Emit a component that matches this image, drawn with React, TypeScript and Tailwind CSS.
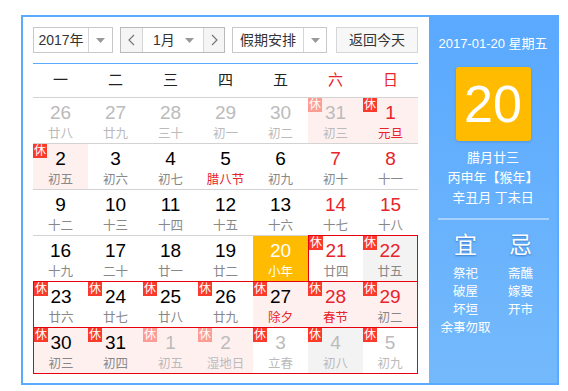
import React from 'react';

type Cell = {
  d: string;
  l: string;
  other?: boolean;
  red?: boolean;
  lred?: boolean;
  bg?: 'pink' | 'gray' | 'today';
  badge?: 'solid' | 'faded';
  box?: boolean;
};

const rows: Cell[][] = [
  [
    { d: '26', l: '廿八', other: true },
    { d: '27', l: '廿九', other: true },
    { d: '28', l: '三十', other: true },
    { d: '29', l: '初一', other: true },
    { d: '30', l: '初二', other: true },
    { d: '31', l: '初三', other: true, bg: 'pink', badge: 'faded' },
    { d: '1', l: '元旦', red: true, lred: true, bg: 'pink', badge: 'solid' },
  ],
  [
    { d: '2', l: '初五', bg: 'pink', badge: 'solid' },
    { d: '3', l: '初六' },
    { d: '4', l: '初七' },
    { d: '5', l: '腊八节', lred: true },
    { d: '6', l: '初九' },
    { d: '7', l: '初十', red: true },
    { d: '8', l: '十一', red: true },
  ],
  [
    { d: '9', l: '十二' },
    { d: '10', l: '十三' },
    { d: '11', l: '十四' },
    { d: '12', l: '十五' },
    { d: '13', l: '十六' },
    { d: '14', l: '十七', red: true },
    { d: '15', l: '十八', red: true },
  ],
  [
    { d: '16', l: '十九' },
    { d: '17', l: '二十' },
    { d: '18', l: '廿一' },
    { d: '19', l: '廿二' },
    { d: '20', l: '小年', bg: 'today' },
    { d: '21', l: '廿四', red: true, badge: 'solid', box: true },
    { d: '22', l: '廿五', red: true, badge: 'solid', box: true, bg: 'gray' },
  ],
  [
    { d: '23', l: '廿六', badge: 'solid', box: true },
    { d: '24', l: '廿七', badge: 'solid', box: true },
    { d: '25', l: '廿八', badge: 'solid', box: true },
    { d: '26', l: '廿九', badge: 'solid', box: true },
    { d: '27', l: '除夕', lred: true, bg: 'pink', badge: 'solid', box: true },
    { d: '28', l: '春节', red: true, lred: true, bg: 'pink', badge: 'solid', box: true },
    { d: '29', l: '初二', red: true, bg: 'pink', badge: 'solid', box: true },
  ],
  [
    { d: '30', l: '初三', bg: 'pink', badge: 'solid', box: true },
    { d: '31', l: '初四', bg: 'pink', badge: 'solid', box: true },
    { d: '1', l: '初五', other: true, bg: 'pink', badge: 'faded', box: true },
    { d: '2', l: '湿地日', other: true, bg: 'pink', badge: 'faded', box: true },
    { d: '3', l: '立春', other: true, badge: 'solid', box: true },
    { d: '4', l: '初八', other: true, bg: 'gray', badge: 'solid', box: true },
    { d: '5', l: '初九', other: true, badge: 'solid', box: true },
  ],
];

const weekdays = ['一', '二', '三', '四', '五', '六', '日'];

function Caret() {
  return (
    <svg width="9" height="5" viewBox="0 0 9 5">
      <path d="M0 0 L9 0 L4.5 5 Z" fill="#999" />
    </svg>
  );
}

function Chevron({ dir }: { dir: 'l' | 'r' }) {
  return (
    <svg width="7" height="12" viewBox="0 0 7 12">
      <path
        d={dir === 'l' ? 'M6 1 L1 6 L6 11' : 'M1 1 L6 6 L1 11'}
        fill="none"
        stroke="#777"
        strokeWidth="1.2"
      />
    </svg>
  );
}

function DayCell({ c, r, i }: { c: Cell; r: number; i: number }) {
  const row = rows[r];
  const below = rows[r + 1]?.[i];
  const redBottom = c.box || below?.box;
  const leftEdge = c.box && (i === 0 || !row[i - 1].box);
  const rightEdge = c.box && (i === 6 || !row[i + 1].box);

  const bg =
    c.bg === 'today'
      ? 'bg-[#ffbb00]'
      : c.bg === 'pink'
      ? 'bg-[#fff0f0]'
      : c.bg === 'gray'
      ? 'bg-[#f3f3f3]'
      : 'bg-white';

  const numColor =
    c.bg === 'today'
      ? 'text-white'
      : c.other
      ? 'text-[#bbbbbb]'
      : c.red
      ? 'text-[#e8232b]'
      : 'text-black';

  const lunarColor =
    c.bg === 'today'
      ? 'text-white'
      : c.lred && !c.other
      ? 'text-[#e8232b]'
      : c.other
      ? 'text-[#bbbbbb]'
      : 'text-[#888888]';

  return (
    <div
      className={[
        'relative w-[55px] h-[46px] box-border border-b border-solid flex flex-col items-center pt-[5px]',
        redBottom ? 'border-b-red-600' : 'border-b-[#d3d3d3]',
        leftEdge ? 'border-l border-l-red-600' : '',
        rightEdge ? 'border-r border-r-red-600' : '',
        bg,
      ].join(' ')}
    >
      {c.badge && (
        <span
          className={[
            'absolute top-0 left-0 w-[14px] h-[14px] text-[12px] leading-[14px] text-center text-white',
            c.badge === 'solid' ? 'bg-[#fa3a2a]' : 'bg-[#fb9d94]',
          ].join(' ')}
        >
          休
        </span>
      )}
      <span className={`text-[19px] leading-[20px] ${numColor}`}>{c.d}</span>
      <span className={`text-[12.5px] leading-[16px] mt-[3px] ${lunarColor}`}>{c.l}</span>
    </div>
  );
}

export default function App() {
  return (
    <div
      className="min-h-screen bg-white pt-[15px] pl-[21px]"
      style={{ fontFamily: '"Liberation Sans", Arial, "Noto Sans CJK SC", sans-serif' }}
    >
      <div className="w-[538px] h-[370px] border-2 border-[#5aabff] flex box-border">
        {/* calendar */}
        <div className="w-[406px] bg-white pt-[10px] pl-[10px] pr-[11px]">
          <div className="flex items-center h-[26px] text-[14px] text-[#333]">
            <div className="flex h-[26px] w-[80px] border border-[#c8c8c8] box-border">
              <div className="w-[54px] flex items-center justify-center">2017年</div>
              <div className="flex-1 border-l border-[#d6d6d6] flex items-center justify-center">
                <Caret />
              </div>
            </div>
            <div className="flex h-[26px] w-[105px] ml-[7px] border border-[#b9b9b9] box-border">
              <div className="w-[22px] bg-[#f5f5f5] flex items-center justify-center border-r border-[#d6d6d6]">
                <Chevron dir="l" />
              </div>
              <div className="w-[60px] flex items-center pl-[10px] pr-[9px] justify-between">
                <span>1月</span>
                <Caret />
              </div>
              <div className="flex-1 bg-[#f5f5f5] flex items-center justify-center border-l border-[#d6d6d6]">
                <Chevron dir="r" />
              </div>
            </div>
            <div className="flex h-[26px] w-[95px] ml-[7px] border border-[#c8c8c8] box-border">
              <div className="w-[70px] flex items-center justify-center">假期安排</div>
              <div className="flex-1 border-l border-[#d6d6d6] flex items-center justify-center">
                <Caret />
              </div>
            </div>
            <button className="ml-auto h-[26px] w-[82px] border border-[#d6d6d6] bg-[#f7f7f7] text-[14px] text-[#333] box-border">
              返回今天
            </button>
          </div>

          <div className="mt-[10px] h-px bg-[#5aabff]" />

          <div className="flex h-[34px] border-b border-[#d3d3d3] box-border">
            {weekdays.map((w, i) => (
              <div
                key={w}
                className={`w-[55px] flex items-center justify-center text-[15px] ${
                  i >= 5 ? 'text-[#e8232b]' : 'text-[#222]'
                }`}
              >
                {w}
              </div>
            ))}
          </div>

          {rows.map((row, r) => (
            <div key={r} className="flex">
              {row.map((c, i) => (
                <DayCell key={i} c={c} r={r} i={i} />
              ))}
            </div>
          ))}
        </div>

        {/* side panel */}
        <div className="flex-1 bg-gradient-to-b from-[#59a9ff] to-[#74b9fb] text-white flex flex-col items-center">
          <div className="mt-[17px] text-[13px] leading-[20px]">2017-01-20 星期五</div>
          <div className="mt-[13px] w-[75px] h-[74px] rounded-[3px] bg-[#ffbb00] shadow-[0_1px_3px_rgba(0,0,0,0.15)] flex items-center justify-center text-[52px] leading-none">
            20
          </div>
          <div className="mt-[7px] text-[13px] leading-[20px] text-center">
            <div>腊月廿三</div>
            <div>丙申年【猴年】</div>
            <div>辛丑月 丁未日</div>
          </div>
          <div className="mt-[10px] w-[111px] h-[2px] bg-[#a5d0ff]" />
          <div className="mt-[12px] flex">
            <div className="w-[55px] flex flex-col items-center">
              <div className="text-[23px] leading-[26px] [text-shadow:0_1px_2px_rgba(0,60,140,0.5)]">宜</div>
              <div className="mt-[7px] text-[12.5px] leading-[18px] text-center">
                <div>祭祀</div>
                <div>破屋</div>
                <div>坏垣</div>
                <div className="whitespace-nowrap">余事勿取</div>
              </div>
            </div>
            <div className="w-[55px] flex flex-col items-center">
              <div className="text-[23px] leading-[26px] [text-shadow:0_1px_2px_rgba(0,60,140,0.5)]">忌</div>
              <div className="mt-[7px] text-[12.5px] leading-[18px] text-center">
                <div>斋醮</div>
                <div>嫁娶</div>
                <div>开市</div>
              </div>
            </div>
          </div>
        </div>
      </div>
    </div>
  );
}
